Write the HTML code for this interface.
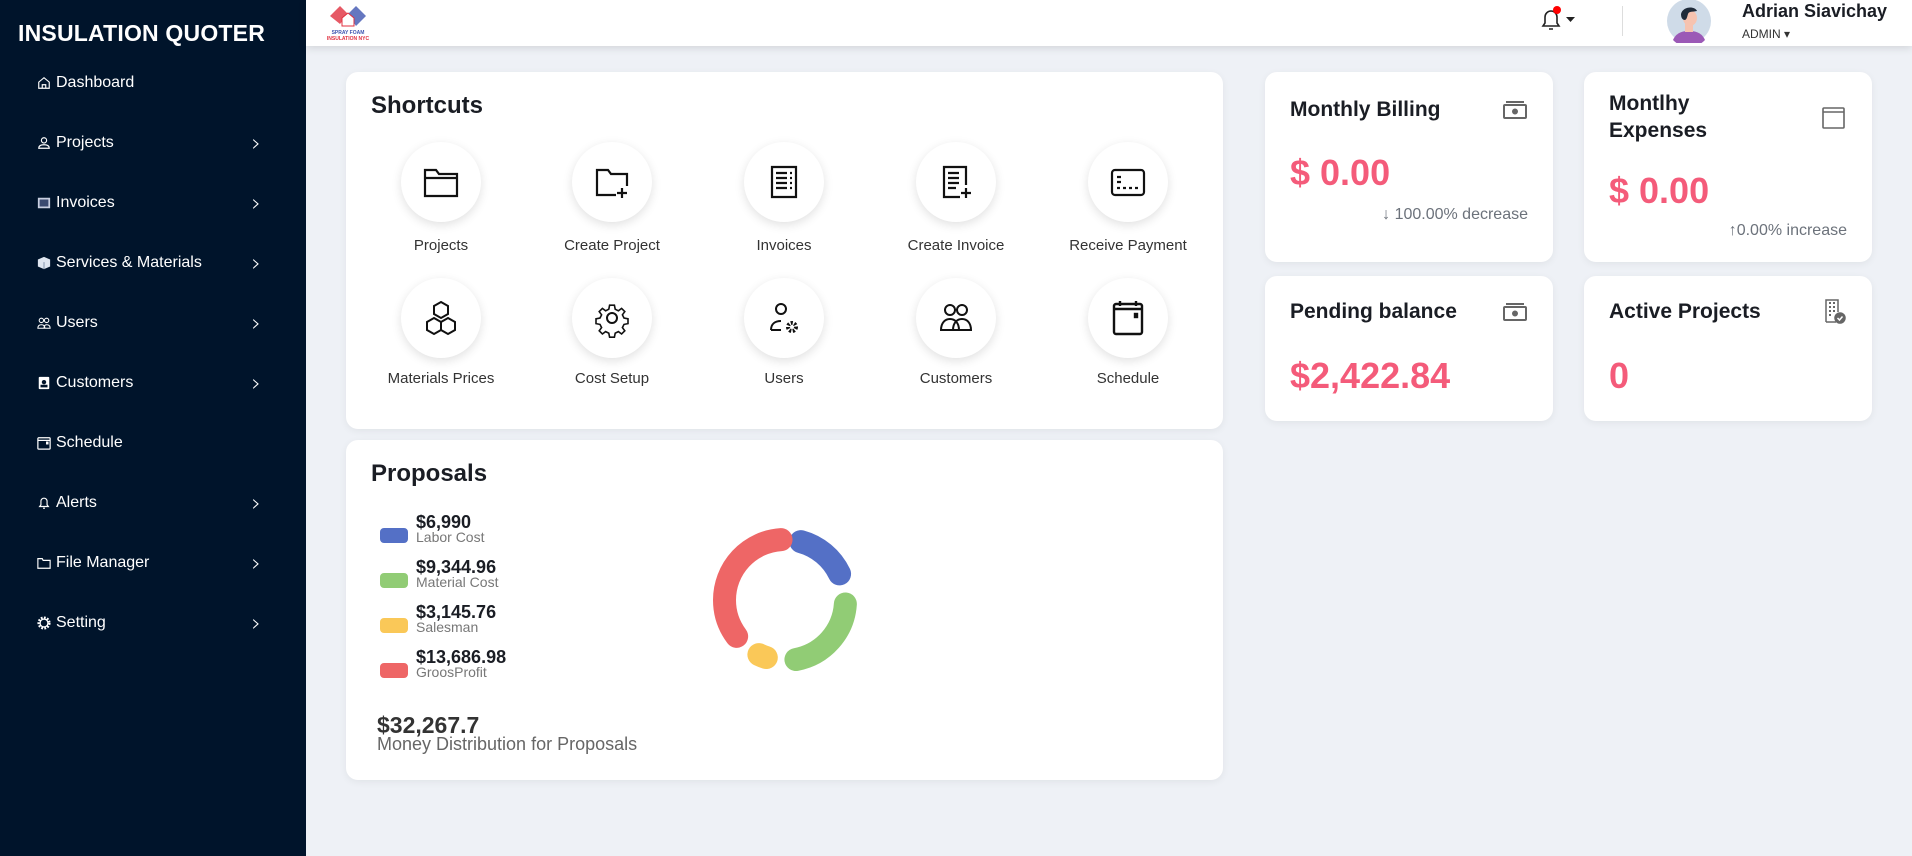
<!DOCTYPE html>
<html><head><meta charset="utf-8"><style>
*{margin:0;padding:0;box-sizing:border-box}
body{width:1912px;height:856px;overflow:hidden;background:#eef1f6;font-family:"Liberation Sans",sans-serif;position:relative;color:#1a1d24}
.side{position:absolute;left:0;top:0;width:306px;height:856px;background:#00142b;color:#fff}
.side h1{position:absolute;left:18px;top:20px;font-size:23px;font-weight:bold;letter-spacing:0.2px}
.nav{position:absolute;left:37px;font-size:16px;display:flex;align-items:center;gap:5px;width:224px}
.nav svg{width:14px;height:14px}
.nav .chev{position:absolute;right:0;top:-5px;font-size:24px;font-weight:300;font-family:"DejaVu Sans",sans-serif}
.top{position:absolute;left:306px;top:0;right:0;height:46px;background:#fff;box-shadow:0 2px 8px rgba(0,0,0,.12)}
.card{position:absolute;background:#fff;border-radius:12px;box-shadow:0 2px 8px rgba(0,0,0,.06)}
.circ{position:absolute;width:80px;height:80px;border-radius:50%;background:#fff;box-shadow:0 3px 10px rgba(0,0,0,.12);display:flex;align-items:center;justify-content:center}
.lbl{position:absolute;width:180px;text-align:center;font-size:15px;color:#333}
.ct{position:absolute;font-size:21px;font-weight:bold;color:#1a1d24;line-height:27px}
.val{position:absolute;font-size:36px;font-weight:bold;color:#f45b7a}
.sub{position:absolute;font-size:16px;color:#6c727b}
.ic{position:absolute}
</style></head><body>
<div class="side">
<h1>INSULATION QUOTER</h1>
<div class="nav" style="top:74px"><svg viewBox="0 0 16 16" fill="none" stroke="#fff" stroke-width="1.3"><path d="M2 7 8 2l6 5v7H2z M6 14v-4h4v4"/></svg>Dashboard</div>
<div class="nav" style="top:134px"><svg viewBox="0 0 16 16" fill="none" stroke="#fff" stroke-width="1.3"><circle cx="8" cy="5" r="3"/><path d="M2 14c0-3 3-4 6-4s6 1 6 4z"/></svg>Projects<span class="chev">›</span></div>
<div class="nav" style="top:194px"><svg viewBox="0 0 16 16"><rect x="1" y="2" width="14" height="12" fill="#c8cfe0"/><rect x="3" y="4" width="10" height="8" fill="#3b4b70"/></svg>Invoices<span class="chev">›</span></div>
<div class="nav" style="top:254px"><svg viewBox="0 0 16 16"><path d="M8 1 15 4v8l-7 3-7-3V4z" fill="#dfe6f0"/><path d="M8 7v8" stroke="#7a8aa5"/></svg>Services &amp; Materials<span class="chev">›</span></div>
<div class="nav" style="top:314px"><svg viewBox="0 0 16 16" fill="none" stroke="#fff" stroke-width="1.2"><circle cx="5" cy="5" r="2.5"/><circle cx="11" cy="5" r="2.5"/><path d="M1 14c0-3 2-4 4-4s4 1 4 4zM8 14c0-3 1-4 3-4s4 1 4 4z"/></svg>Users<span class="chev">›</span></div>
<div class="nav" style="top:374px"><svg viewBox="0 0 16 16"><rect x="2" y="1" width="12" height="14" rx="1" fill="#fff"/><circle cx="8" cy="7" r="2.5" fill="#00142b"/><rect x="4" y="10" width="8" height="3" fill="#00142b"/></svg>Customers<span class="chev">›</span></div>
<div class="nav" style="top:434px"><svg viewBox="0 0 16 16" fill="none" stroke="#fff" stroke-width="1.4"><rect x="1" y="2" width="14" height="13" rx="1"/><path d="M1 5h14"/><rect x="11" y="7" width="1.5" height="2" fill="#fff"/></svg>Schedule</div>
<div class="nav" style="top:494px"><svg viewBox="0 0 16 16" fill="none" stroke="#fff" stroke-width="1.3"><path d="M3 12h10l-1.5-2V6a3.5 3.5 0 0 0-7 0v4z M7 14h2"/></svg>Alerts<span class="chev">›</span></div>
<div class="nav" style="top:554px"><svg viewBox="0 0 16 16" fill="none" stroke="#fff" stroke-width="1.3"><path d="M1 3h5l1 2h8v9H1z"/></svg>File Manager<span class="chev">›</span></div>
<div class="nav" style="top:614px"><svg viewBox="0 0 16 16"><circle cx="8" cy="8" r="6" fill="none" stroke="#fff" stroke-width="3" stroke-dasharray="2 1.5"/><circle cx="8" cy="8" r="4.5" fill="none" stroke="#fff" stroke-width="1.5"/></svg>Setting<span class="chev">›</span></div>
</div>
<div class="top">
<svg class="ic" style="left:20px;top:2px" width="44" height="42" viewBox="0 0 44 42"><path d="M4 14 14 4l8 8-8 10z" fill="#e0303f" opacity=".8"/><path d="M22 12l8-8 10 10-10 10z" fill="#3e55b0" opacity=".8"/><path d="M16 16l6-5 6 5v8H16z" fill="#fff" stroke="#e0303f"/><text x="22" y="32" font-size="5" text-anchor="middle" fill="#3e55b0" font-weight="bold">SPRAY FOAM</text><text x="22" y="38" font-size="5" text-anchor="middle" fill="#e0303f" font-weight="bold">INSULATION NYC</text></svg>
<svg class="ic" style="left:1234px;top:6px" width="40" height="26" viewBox="0 0 40 26"><path d="M3 20h16l-2-3v-6a6 6 0 0 0-12 0v6z M9 23h4" fill="none" stroke="#222" stroke-width="1.6"/><circle cx="17" cy="4" r="4" fill="#f00"/><path d="M26 11h9l-4.5 5z" fill="#222"/></svg>
<div style="position:absolute;left:1316px;top:6px;width:1px;height:30px;background:#ddd"></div>
<svg class="ic" style="left:1361px;top:0" width="44" height="43" viewBox="0 0 44 43"><circle cx="22" cy="21" r="22" fill="#cfdbe8"/><path d="M6 40c3-7 9-9 16-9s13 2 16 9a22 22 0 0 1-32 0z" fill="#9b59b6"/><rect x="18" y="22" width="8" height="10" fill="#f6c3b0"/><ellipse cx="23" cy="18" rx="7" ry="8" fill="#f6c3b0"/><path d="M14 14c2-8 14-8 16-3-4 1-8 0-9 3-1 3-1 5-3 6-3 0-4-3-4-6z" fill="#1f2b3a"/></svg>
<div style="position:absolute;left:1436px;top:1px;font-size:18px;font-weight:bold">Adrian Siavichay</div>
<div style="position:absolute;left:1436px;top:27px;font-size:12px;color:#333">ADMIN ▾</div>
</div>

<div class="card" style="left:346px;top:72px;width:877px;height:357px">
<div style="position:absolute;left:25px;top:20px;font-size:24px;font-weight:bold">Shortcuts</div>
</div>
<div class="circ" style="left:401px;top:142px"><svg width="40" height="40" viewBox="0 0 40 40" fill="none" stroke="#111" stroke-width="2.2"><path d="M4 8h11l3 4h18v22H4z"/><path d="M4 16h32"/></svg></div>
<div class="circ" style="left:572px;top:142px"><svg width="40" height="40" viewBox="0 0 40 40" fill="none" stroke="#111" stroke-width="2.2"><path d="M24 33H5V8h11l3 4h16v12"/><path d="M30 26v10M25 31h10"/></svg></div>
<div class="circ" style="left:744px;top:142px"><svg width="40" height="40" viewBox="0 0 40 40" fill="none" stroke="#111" stroke-width="2.2"><path d="M8 5h24v30H8z"/><path d="M12 11h11M12 16h11M12 21h11M12 26h11M26 11h2M26 16h2M26 21h2M26 26h2"/></svg></div>
<div class="circ" style="left:916px;top:142px"><svg width="40" height="40" viewBox="0 0 40 40" fill="none" stroke="#111" stroke-width="2.2"><path d="M24 35H8V5h22v18"/><path d="M12 11h11M12 16h11M12 21h11M12 26h8M30 26v10M25 31h10"/></svg></div>
<div class="circ" style="left:1088px;top:142px"><svg width="40" height="40" viewBox="0 0 40 40" fill="none" stroke="#111" stroke-width="2.2"><rect x="4" y="8" width="32" height="25" rx="3"/><path d="M9 15h4M9 20h4M9 26h3M15 26h3M21 26h3M27 26h3"/></svg></div>
<div class="lbl" style="left:351px;top:237px">Projects</div>
<div class="lbl" style="left:522px;top:237px">Create Project</div>
<div class="lbl" style="left:694px;top:237px">Invoices</div>
<div class="lbl" style="left:866px;top:237px">Create Invoice</div>
<div class="lbl" style="left:1038px;top:237px">Receive Payment</div>
<div class="circ" style="left:401px;top:278px"><svg width="40" height="40" viewBox="0 0 40 40" fill="none" stroke="#111" stroke-width="2"><path d="M20 4l7 4v8l-7 4-7-4V8z M13 20l7 4v8l-7 4-7-4v-8z M27 20l7 4v8l-7 4-7-4v-8z"/></svg></div>
<div class="circ" style="left:572px;top:278px"><svg width="40" height="40" viewBox="0 0 40 40" fill="none" stroke="#111" stroke-width="2"><circle cx="20" cy="20" r="5"/><path d="M17 4h6l1 5 4 2 4-3 4 4-3 4 2 4 5 1v6l-5 1-2 4 3 4-4 4-4-3-4 2-1 5h-6l-1-5-4-2-4 3-4-4 3-4-2-4-5-1v-6l5-1 2-4-3-4 4-4 4 3 4-2z" transform="translate(20 20) scale(.8) translate(-20 -20)"/></svg></div>
<div class="circ" style="left:744px;top:278px"><svg width="40" height="40" viewBox="0 0 40 40" fill="none" stroke="#111" stroke-width="2"><circle cx="17" cy="11" r="5"/><path d="M7 32c0-6 4-9 10-9"/><path d="M7 32h10"/><circle cx="28" cy="29" r="4" stroke-width="4" stroke-dasharray="2 1.5"/></svg></div>
<div class="circ" style="left:916px;top:278px"><svg width="40" height="40" viewBox="0 0 40 40" fill="none" stroke="#111" stroke-width="2"><circle cx="14" cy="12" r="5"/><circle cx="26" cy="12" r="5"/><path d="M5 32c0-7 4-11 9-11s9 4 9 11zM17 32c0-7 4-11 9-11s9 4 9 11z"/></svg></div>
<div class="circ" style="left:1088px;top:278px"><svg width="40" height="40" viewBox="0 0 40 40" fill="none" stroke="#111" stroke-width="2.4"><rect x="6" y="6" width="28" height="30" rx="2"/><path d="M6 11h28M12 3v5M28 3v5" /><rect x="27" y="16" width="2" height="3" fill="#111"/></svg></div>
<div class="lbl" style="left:351px;top:370px">Materials Prices</div>
<div class="lbl" style="left:522px;top:370px">Cost Setup</div>
<div class="lbl" style="left:694px;top:370px">Users</div>
<div class="lbl" style="left:866px;top:370px">Customers</div>
<div class="lbl" style="left:1038px;top:370px">Schedule</div>

<div class="card" style="left:346px;top:440px;width:877px;height:340px">
<div style="position:absolute;left:25px;top:20px;font-size:24px;font-weight:bold">Proposals</div>
<div style="position:absolute;left:34px;top:88px;width:28px;height:15px;border-radius:4px;background:#5470c6"></div>
<div style="position:absolute;left:34px;top:133px;width:28px;height:15px;border-radius:4px;background:#91cc75"></div>
<div style="position:absolute;left:34px;top:178px;width:28px;height:15px;border-radius:4px;background:#fac858"></div>
<div style="position:absolute;left:34px;top:223px;width:28px;height:15px;border-radius:4px;background:#ee6666"></div>
<div style="position:absolute;left:70px;top:75px;line-height:15px">
<div style="font-size:18px;font-weight:bold;height:15px">$6,990</div><div style="font-size:14px;color:#777;height:30px">Labor Cost</div>
<div style="font-size:18px;font-weight:bold;height:15px">$9,344.96</div><div style="font-size:14px;color:#777;height:30px">Material Cost</div>
<div style="font-size:18px;font-weight:bold;height:15px">$3,145.76</div><div style="font-size:14px;color:#777;height:30px">Salesman</div>
<div style="font-size:18px;font-weight:bold;height:15px">$13,686.98</div><div style="font-size:14px;color:#777">GroosProfit</div>
</div>
<div style="position:absolute;left:31px;top:272px;font-size:23px;font-weight:bold;color:#333">$32,267.7</div>
<div style="position:absolute;left:31px;top:294px;font-size:18px;color:#666">Money Distribution for Proposals</div>
<svg style="position:absolute;left:364px;top:85px" width="150" height="150" viewBox="0 0 150 150">
<g transform="rotate(-90 75 75)" fill="none" stroke-width="23" stroke-linecap="round">
<circle cx="75" cy="75" r="60.5" stroke="#5470c6" stroke-dasharray="52 400" stroke-dashoffset="-16"/>
<circle cx="75" cy="75" r="60.5" stroke="#91cc75" stroke-dasharray="80 400" stroke-dashoffset="-99"/>
<circle cx="75" cy="75" r="60.5" stroke="#fac858" stroke-dasharray="8 400" stroke-dashoffset="-209"/>
<circle cx="75" cy="75" r="60.5" stroke="#ee6666" stroke-dasharray="130 400" stroke-dashoffset="-246"/>
</g></svg>
</div>

<div class="card" style="left:1265px;top:72px;width:288px;height:190px">
<div class="ct" style="left:25px;top:24px">Monthly Billing</div>
<svg class="ic" style="left:238px;top:28px" width="24" height="20" viewBox="0 0 24 20" fill="none" stroke="#666" stroke-width="2"><rect x="1" y="5" width="22" height="13" rx="1"/><path d="M3 2h18"/><circle cx="12" cy="11.5" r="2" fill="#666"/></svg>
<div class="val" style="left:25px;top:80px">$ 0.00</div>
<div class="sub" style="right:25px;top:134px">↓ 100.00% decrease</div>
</div>
<div class="card" style="left:1584px;top:72px;width:288px;height:190px">
<div class="ct" style="left:25px;top:18px">Montlhy<br>Expenses</div>
<svg class="ic" style="left:238px;top:34px" width="24" height="24" viewBox="0 0 24 24" fill="none" stroke="#666" stroke-width="1.6"><rect x="1" y="2" width="21" height="20" rx="1"/><path d="M1 6h21"/></svg>
<div class="val" style="left:25px;top:98px">$ 0.00</div>
<div class="sub" style="right:25px;top:150px">↑0.00% increase</div>
</div>
<div class="card" style="left:1265px;top:276px;width:288px;height:145px">
<div class="ct" style="left:25px;top:22px">Pending balance</div>
<svg class="ic" style="left:238px;top:26px" width="24" height="20" viewBox="0 0 24 20" fill="none" stroke="#666" stroke-width="2"><rect x="1" y="5" width="22" height="13" rx="1"/><path d="M3 2h18"/><circle cx="12" cy="11.5" r="2" fill="#666"/></svg>
<div class="val" style="left:25px;top:79px">$2,422.84</div>
</div>
<div class="card" style="left:1584px;top:276px;width:288px;height:145px">
<div class="ct" style="left:25px;top:22px">Active Projects</div>
<svg class="ic" style="left:240px;top:22px" width="22" height="26" viewBox="0 0 22 26" fill="none" stroke="#666" stroke-width="1.5"><path d="M2 24V2h12v12M2 24h10"/><path d="M5 5h2M9 5h2M5 9h2M9 9h2M5 13h2M9 13h2M5 17h2" stroke-width="2"/><circle cx="16" cy="20" r="5" fill="#666"/><path d="M13.5 20l2 2 3-3.5" stroke="#fff"/></svg>
<div class="val" style="left:25px;top:79px">0</div>
</div>
</body></html>
